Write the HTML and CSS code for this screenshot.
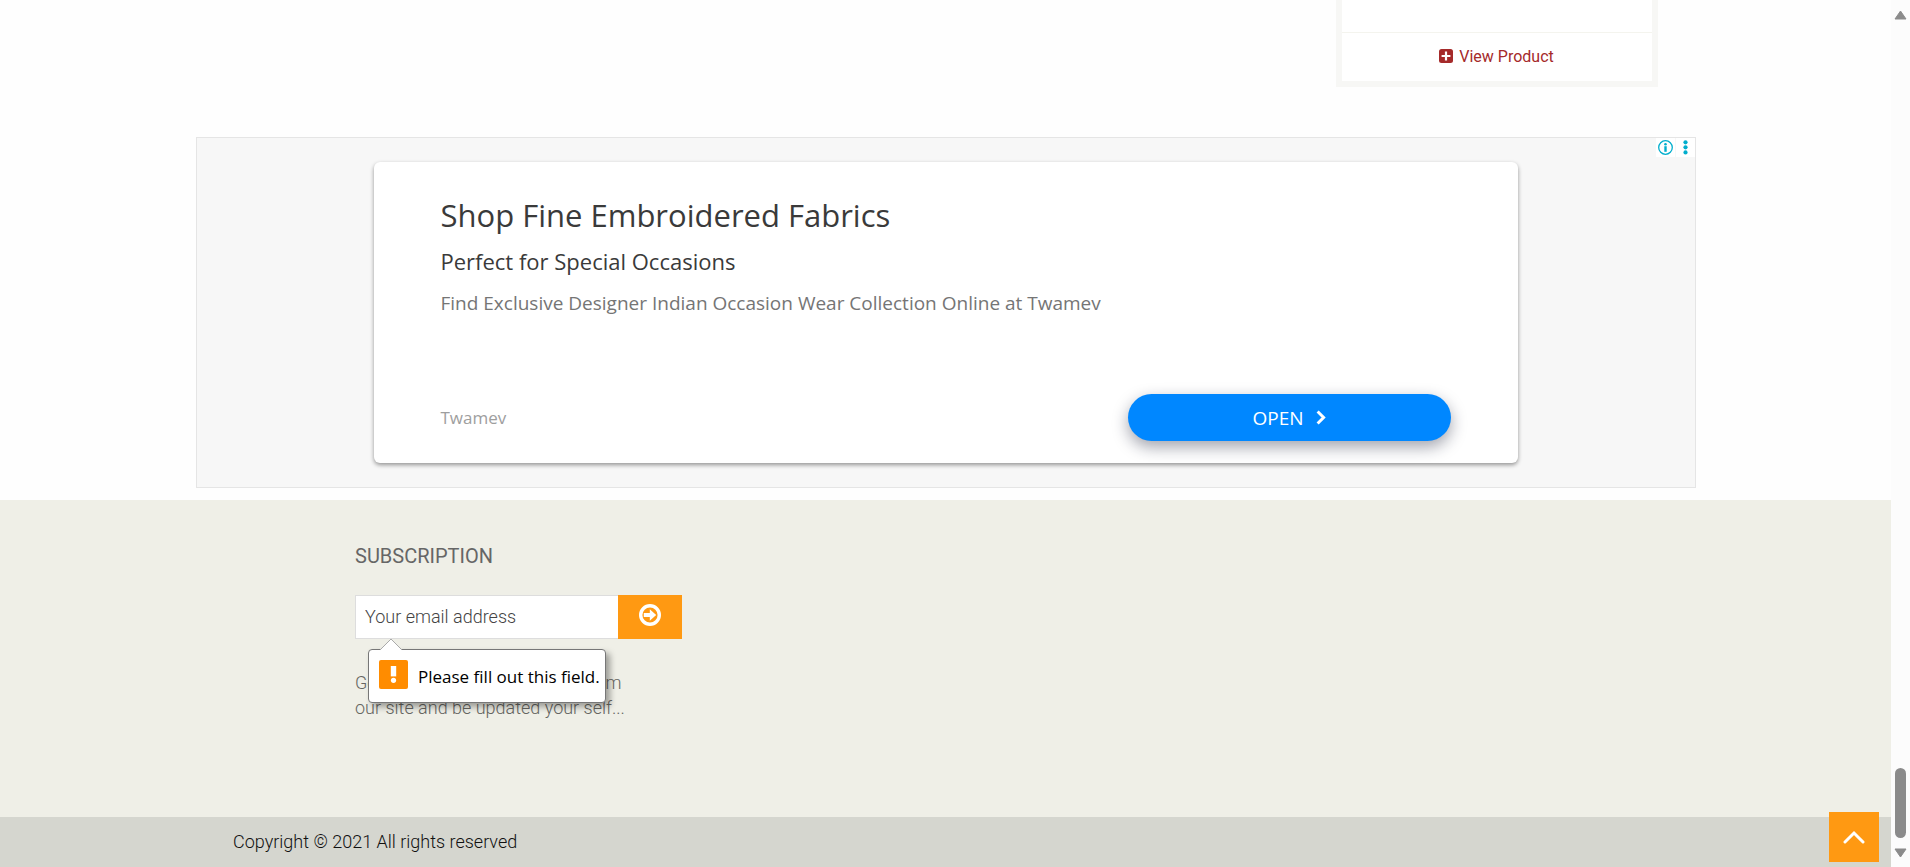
FILE: index.html
```html
<!DOCTYPE html>
<html lang="en">
<head>
<meta charset="utf-8">
<meta name="viewport" content="width=device-width, initial-scale=1">
<title>Shop</title>
<link rel="stylesheet" href="styles.css">
</head>
<body>
<div class="page">
  <main class="products">
    <article class="product-card">
      <a class="view-product" href="#">
        <svg width="14" height="14" viewBox="0 0 14 14" aria-hidden="true"><rect width="14" height="14" rx="2.5" fill="#a52a2a"/><path d="M7 2.6v8.8M2.6 7h8.8" stroke="#fff" stroke-width="2.2"/></svg>
        <span>View Product</span>
      </a>
    </article>
  </main>

  <section class="ad" aria-label="Advertisement">
    <div class="ad-tools">
      <button class="ad-tool" type="button" aria-label="Ad information">
        <svg width="15" height="15" viewBox="0 0 15 15"><circle cx="7.5" cy="7.5" r="6.8" fill="none" stroke="#00aecd" stroke-width="1.3"/><circle cx="7.5" cy="4.2" r="1.3" fill="#00aecd"/><path d="M7.5 6.2v5.6" stroke="#00aecd" stroke-width="2.4"/></svg>
      </button>
      <button class="ad-tool" type="button" aria-label="Ad options">
        <svg width="15" height="15" viewBox="0 0 15 15" fill="#00aecd"><circle cx="7.5" cy="2.3" r="2.1"/><circle cx="7.5" cy="7.3" r="2.1"/><circle cx="7.5" cy="12.4" r="2.1"/></svg>
      </button>
    </div>
    <div class="ad-card">
      <h2 class="ad-title">Shop Fine Embroidered Fabrics</h2>
      <p class="ad-subtitle">Perfect for Special Occasions</p>
      <p class="ad-text">Find Exclusive Designer Indian Occasion Wear Collection Online at Twamev</p>
      <div class="ad-bottom">
        <span class="ad-brand">Twamev</span>
        <a class="ad-open" href="#">OPEN
          <svg width="10" height="15" viewBox="0 0 10 15" aria-hidden="true"><path d="M1.6 1.5l6 6-6 6" fill="none" stroke="#fff" stroke-width="3"/></svg>
        </a>
      </div>
    </div>
  </section>

  <footer class="footer">
    <section class="subscription">
      <h2 class="subscription-title">SUBSCRIPTION</h2>
      <form class="subscribe">
        <input class="email" type="email" placeholder="Your email address" aria-label="Your email address" required autofocus>
        <button class="send" type="submit" aria-label="Subscribe">
          <svg width="22" height="22" viewBox="0 0 22 22"><circle cx="11" cy="11" r="9.3" fill="none" stroke="#fff" stroke-width="3.4"/><path d="M4.8 9h6V5.3l6.4 5.7-6.4 5.7V13h-6z" fill="#fff"/></svg>
        </button>
        <div class="tip" role="alert">
          <svg class="tip-arrow" width="22" height="12" viewBox="0 0 22 12" aria-hidden="true"><path d="M0 12L11 1l11 11" fill="#fff" stroke="#aaa"/></svg>
          <svg width="29" height="29" viewBox="0 0 29 29" aria-hidden="true"><rect width="29" height="29" rx="2" fill="#ff8c00"/><path d="M11.8 6h5.4v10.4h-5.4z" fill="#fff"/><circle cx="14.5" cy="20.3" r="2.6" fill="#fff"/></svg>
          <span class="tip-text">Please fill out this field.</span>
        </div>
      </form>
      <p class="subscription-text">Get the most recent updates from <br>our site and be updated your self...</p>
    </section>
    <div class="copyright">Copyright © 2021 All rights reserved</div>
  </footer>
  <button class="to-top" type="button" aria-label="Back to top">
    <svg width="22" height="14" viewBox="0 0 22 14"><path d="M2 12l9-9 9 9" fill="none" stroke="#fff" stroke-width="3" stroke-linecap="round"/></svg>
  </button>
</div>
<div class="scrollbar" aria-hidden="true">
  <svg width="13" height="10" viewBox="0 0 13 10"><path d="M6.5 1L12 9H1z" fill="#8b8b8b" stroke="#8b8b8b" stroke-linejoin="round"/></svg>
  <div class="thumb"></div>
  <svg width="13" height="10" viewBox="0 0 13 10"><path d="M6.5 9L12 1H1z" fill="#8b8b8b" stroke="#8b8b8b" stroke-linejoin="round"/></svg>
</div>
</body>
</html>
```
FILE: styles.css
```css
* { box-sizing: border-box; }
body {
  margin: 0;
  min-height: 100vh;
  display: flex;
  background: #fefefe;
  font-family: Roboto, "Liberation Sans", sans-serif;
}
h2, p { margin: 0; font-weight: 400; }
button { border: 0; padding: 0; cursor: pointer; }
svg { display: block; flex: none; }

.page { flex: 1; position: relative; display: flex; flex-direction: column; }

.products {
  width: 80%;
  max-width: 1424px;
  margin: 0 auto;
  display: flex;
  justify-content: flex-end;
}
.product-card {
  width: 322px;
  padding-top: 32px;
  border: 6px solid #f7f7f5;
  border-top: 0;
  background: #fff;
}
.view-product {
  display: flex;
  justify-content: center;
  align-items: center;
  gap: 6px;
  height: 49px;
  padding-bottom: 2px;
  border-top: 1px solid #f4f4ee;
  color: #a52a2a;
  font-size: 16px;
  text-decoration: none;
}

.ad {
  position: relative;
  width: 80%;
  max-width: 1500px;
  margin: 50px auto 12px;
  padding: 24px 0;
  border: 1px solid #e5e5e5;
  background: #f7f7f7;
}
.ad-tools { position: absolute; top: 0; right: 0; display: flex; gap: 1px; }
.ad-tool { width: 19px; height: 19px; display: grid; place-items: center; background: #fff; }
.ad-card {
  width: 1144px;
  max-width: 90%;
  min-height: 301px;
  margin: 0 auto;
  padding: 31px 67px 22px;
  display: flex;
  flex-direction: column;
  border-radius: 6px;
  background: #fff;
  box-shadow: 0 2px 4px rgba(0, 0, 0, .4);
  color: #3a3a3a;
  font-family: "Open Sans", sans-serif;
}
.ad-title { font-size: 31px; line-height: 44px; }
.ad-subtitle { margin-top: 9px; font-size: 22px; line-height: 30px; }
.ad-text { margin-top: 13px; font-size: 19px; line-height: 28px; color: #757575; }
.ad-bottom { margin-top: auto; display: flex; justify-content: space-between; align-items: center; }
.ad-brand { font-size: 17px; color: #9e9e9e; }
.ad-open {
  display: flex;
  justify-content: center;
  align-items: center;
  gap: 12px;
  width: 323px;
  height: 47px;
  border-radius: 24px;
  background: #0087ff;
  box-shadow: 0 6px 16px rgba(20, 25, 50, .4);
  color: #fff;
  font-size: 19px;
  text-decoration: none;
}

.footer { flex: 1; display: flex; flex-direction: column; background: #efefe7; }
.subscription { padding: 44px 24px 0 355px; }
.subscription-title { font-size: 20px; line-height: 24px; color: #666; }
.subscribe { position: relative; display: flex; width: 327px; height: 44px; margin-top: 27px; }
.email {
  flex: 1;
  min-width: 0;
  padding: 0 9px 2px;
  border: 1px solid #ddd;
  border-right: 0;
  outline: 0;
  background: #fff;
  caret-color: #aaa;
  font: 300 18px Roboto, sans-serif;
}
.email::placeholder { color: #444; }
.send { width: 64px; padding-bottom: 4px; display: grid; place-items: center; background: #ff9912; }
.tip {
  position: absolute;
  top: 54px;
  left: 13px;
  display: flex;
  align-items: center;
  gap: 10px;
  width: 238px;
  height: 54px;
  padding: 0 10px 4px;
  border: 1px solid #777;
  border-radius: 4px;
  background: #fff;
  box-shadow: 4px 4px 6px rgba(0, 0, 0, .35);
  color: #000;
  font: 17px "Open Sans", sans-serif;
  white-space: nowrap;
}
.tip-text { padding-top: 4px; }
.tip-arrow { position: absolute; top: -12px; left: 11px; }
.subscription-text { margin-top: 31px; font-size: 18px; font-weight: 300; line-height: 25px; color: #666662; }
.copyright {
  margin-top: auto;
  padding: 0 24px 0 233px;
  background: #d5d6cf;
  color: #111;
  font-size: 18px;
  font-weight: 300;
  line-height: 50px;
}
.to-top {
  position: absolute;
  right: 12px;
  bottom: 5px;
  width: 50px;
  height: 50px;
  display: grid;
  place-items: center;
  background: #ff9912;
}

.scrollbar {
  width: 19px;
  padding: 10px 0 9px;
  display: flex;
  flex-direction: column;
  align-items: center;
  background: #fcfcfc;
}
.thumb { width: 11px; height: 70px; margin: auto 0 10px; border-radius: 6px; background: #8b8b8b; }
```
